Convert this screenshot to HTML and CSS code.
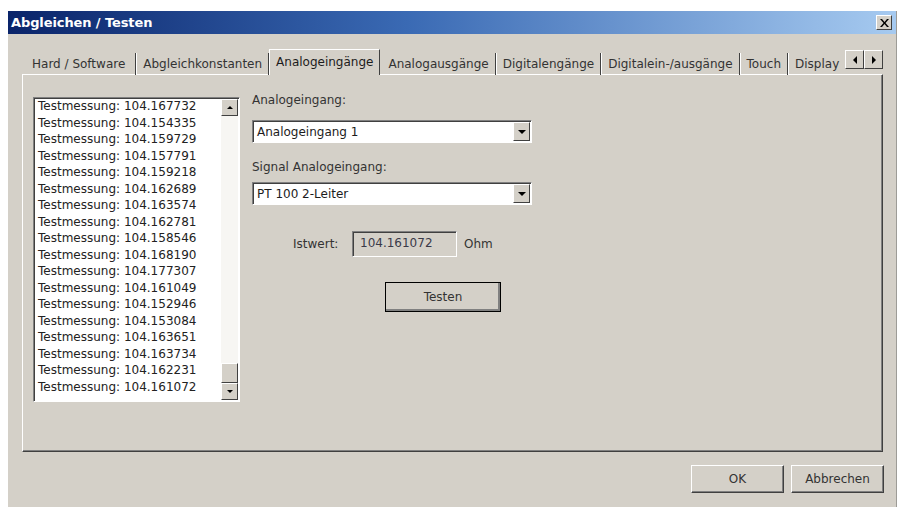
FILE: index.html
```html
<!DOCTYPE html>
<html lang="de">
<head>
  <meta charset="UTF-8" />
  <title>Abgleichen / Testen</title>
  <link rel="stylesheet" href="styles.css">
</head>
<body>

<div class="window">
  <div class="titlebar">
    <span class="caption">Abgleichen / Testen</span>
    <button class="close" title="Schließen">
      <svg width="9" height="8" viewBox="0 0 9 8">
        <path d="M0 0h2l2.5 3 2.5-3h2l-3.5 4 3.5 4h-2l-2.5-3-2.5 3h-2l3.5-4z" fill="#000"/>
      </svg>
    </button>
  </div>

  <div class="client">
    <div class="tabs">
      <div class="tab">Hard / Software</div>
      <div class="tab">Abgleichkonstanten</div>
      <div class="tab active">Analogeingänge</div>
      <div class="tab">Analogausgänge</div>
      <div class="tab">Digitalengänge</div>
      <div class="tab">Digitalein-/ausgänge</div>
      <div class="tab">Touch</div>
      <div class="tab last">Display</div>
      <div class="spin">
        <button class="spin-btn"><span class="tri left"></span></button>
        <button class="spin-btn"><span class="tri right"></span></button>
      </div>
    </div>

    <div class="panel">
      <div class="listbox">
        <ul class="items" id="items"></ul>
        <div class="vscroll">
          <button class="sb-btn"><span class="tri up"></span></button>
          <div class="track">
            <div class="thumb"></div>
          </div>
          <button class="sb-btn"><span class="tri down"></span></button>
        </div>
      </div>

      <div class="form">
        <label class="field-label first">Analogeingang:</label>
        <div class="combo">
          <span class="combo-text">Analogeingang 1</span>
          <button class="combo-btn"><span class="tri down"></span></button>
        </div>

        <label class="field-label">Signal Analogeingang:</label>
        <div class="combo">
          <span class="combo-text">PT 100 2-Leiter</span>
          <button class="combo-btn"><span class="tri down"></span></button>
        </div>

        <div class="value-row">
          <span class="value-label">Istwert:</span>
          <div class="readonly">104.161072</div>
          <span class="unit">Ohm</span>
        </div>

        <div class="test-row">
          <button class="btn default">Testen</button>
        </div>
      </div>
    </div>

    <div class="actions">
      <button class="btn">OK</button>
      <button class="btn">Abbrechen</button>
    </div>
  </div>
</div>

<script>
  const values = [
    "104.167732", "104.154335", "104.159729", "104.157791", "104.159218",
    "104.162689", "104.163574", "104.162781", "104.158546", "104.168190",
    "104.177307", "104.161049", "104.152946", "104.153084", "104.163651",
    "104.163734", "104.162231", "104.161072"
  ];
  const list = document.getElementById("items");
  values.forEach((v) => {
    const li = document.createElement("li");
    li.textContent = "Testmessung: " + v;
    list.appendChild(li);
  });
</script>

</body>
</html>
```

FILE: styles.css
```css
html, body {
  margin: 0;
  padding: 0;
  background: #fff;
}

body {
  padding: 11px 0 0 8px;
  font-family: "DejaVu Sans", "Liberation Sans", sans-serif;
  font-size: 12px;
  color: #1c1c1c;
}

button {
  font: inherit;
  color: inherit;
  padding: 0;
  margin: 0;
}

.window {
  width: 889px;
  height: 496px;
  display: flex;
  flex-direction: column;
  background: #d4d0c8;
  border-right: 1px solid #9d9c97;
  box-sizing: border-box;
}

/* caption bar */
.titlebar {
  height: 23px;
  flex: none;
  display: flex;
  align-items: center;
  justify-content: space-between;
  padding: 0 4px 0 3px;
  background: linear-gradient(to right, #0a246a 0%, #3a6ab4 45%, #a6caf0 100%);
}

.caption {
  color: #fff;
  font-weight: bold;
  font-size: 13px;
  letter-spacing: -0.1px;
}

.close {
  width: 16px;
  height: 15px;
  display: flex;
  align-items: center;
  justify-content: center;
  background: #d4d0c8;
  border: 1px solid;
  border-color: #fff #404040 #404040 #fff;
}

.client {
  flex: 1;
  display: flex;
  flex-direction: column;
  padding: 16px 13px 14px 14px;
}

/* tab strip */
.tabs {
  height: 25px;
  display: flex;
  align-items: flex-end;
  padding-left: 3px;
  position: relative;
  z-index: 1;
}

.tab {
  height: 22px;
  line-height: 22px;
  padding: 0 6px 0 7px;
  border-right: 1px solid #404040;
  box-shadow: 1px 0 0 #fff;
  color: #333;
  white-space: nowrap;
}

.tab:first-child {
  padding-right: 10px;
}

.tab.active {
  height: 25px;
  line-height: 24px;
  padding: 0 6px;
  border: 1px solid;
  border-color: #fff #404040 transparent #fff;
  border-bottom: none;
  background: #d4d0c8;
  box-shadow: none;
  margin-left: 0;
  margin-right: 1px;
  color: #1c1c1c;
}

.tab.last {
  flex: 1;
  min-width: 0;
  border-right: none;
  box-shadow: none;
  padding-right: 0;
}

.spin {
  flex: none;
  display: flex;
  align-self: flex-start;
  position: relative;
}

.spin-btn {
  width: 19px;
  height: 19px;
  display: flex;
  align-items: center;
  justify-content: center;
  background: #d4d0c8;
  border: 1px solid;
  border-color: #fff #404040 #404040 #fff;
}

/* small arrow glyphs */
.tri {
  width: 0;
  height: 0;
  border: 4px solid transparent;
}

.tri.left { border-right-color: #000; border-left-width: 0; }
.tri.right { border-left-color: #000; border-right-width: 0; }
.tri.up { border-bottom-color: #000; border-top-width: 0; }
.tri.down { border-top-color: #000; border-bottom-width: 0; }

/* page of the active tab */
.panel {
  height: 378px;
  flex: none;
  display: flex;
  align-items: flex-start;
  gap: 12px;
  padding: 22px 0 0 10px;
  box-sizing: border-box;
  border: 1px solid;
  border-color: #fff #404040 #404040 #fff;
  box-shadow: inset -1px -1px 0 #808080;
  margin-top: -1px;
}

.listbox {
  width: 207px;
  height: 305px;
  display: flex;
  background: #fff;
  border: 1px solid;
  border-color: #808080 #fff #fff #808080;
  box-shadow: inset 1px 1px 0 #404040;
  box-sizing: border-box;
}

.items {
  flex: 1;
  list-style: none;
  margin: 0;
  padding: 0 0 0 4px;
  font-size: 12px;
  line-height: 16.5px;
  color: #222;
  white-space: nowrap;
  overflow: hidden;
}

.vscroll {
  width: 17px;
  display: flex;
  flex-direction: column;
  margin: 1px 1px 1px 0;
}

.sb-btn {
  height: 17px;
  flex: none;
  display: flex;
  align-items: center;
  justify-content: center;
  background: #d4d0c8;
  border: 1px solid;
  border-color: #fff #404040 #404040 #fff;
}

.sb-btn .tri {
  border-width: 3px;
}

.sb-btn .tri.up { border-top-width: 0; }
.sb-btn .tri.down { border-bottom-width: 0; }

.track {
  flex: 1;
  display: flex;
  flex-direction: column;
  justify-content: flex-end;
  background: #f7f6f3;
}

.thumb {
  height: 18px;
  background: #d4d0c8;
  border: 1px solid;
  border-color: #fff #404040 #404040 #fff;
}

/* fields on the right */
.form {
  width: 280px;
  display: flex;
  flex-direction: column;
}

.field-label {
  height: 17px;
  margin: 17px 0 5px;
  color: #333;
}

.field-label.first {
  margin: -4px 0 10px;
}

.combo {
  height: 23px;
  display: flex;
  align-items: center;
  background: #fff;
  border: 1px solid;
  border-color: #808080 #fff #fff #808080;
  box-shadow: inset 1px 1px 0 #404040;
  box-sizing: border-box;
}

.combo-text {
  flex: 1;
  padding-left: 4px;
  padding-top: 1px;
}

.combo-btn {
  width: 17px;
  height: 19px;
  margin-right: 1px;
  display: flex;
  align-items: center;
  justify-content: center;
  background: #d4d0c8;
  border: 1px solid;
  border-color: #fff #404040 #404040 #fff;
}

.combo-btn .tri {
  border-width: 4px;
  border-bottom-width: 0;
}

.value-row {
  display: flex;
  align-items: center;
  margin-top: 26px;
  padding-left: 41px;
}

.value-label {
  width: 59px;
  color: #333;
}

.readonly {
  width: 105px;
  height: 26px;
  line-height: 22px;
  padding-left: 7px;
  box-sizing: border-box;
  border: 1px solid;
  border-color: #808080 #fff #fff #808080;
  box-shadow: inset 1px 1px 0 #404040;
  color: #3a3a48;
}

.unit {
  margin-left: 7px;
  color: #333;
}

.test-row {
  display: flex;
  margin-top: 25px;
  padding-left: 133px;
}

.btn {
  width: 93px;
  height: 28px;
  background: #d4d0c8;
  border: 1px solid;
  border-color: #fff #404040 #404040 #fff;
  box-shadow: inset -1px -1px 0 #808080;
  color: #333;
}

.btn.default {
  width: 116px;
  height: 30px;
  outline: 1px solid #000;
  outline-offset: -1px;
  box-shadow: inset -2px -2px 0 #808080;
}

.actions {
  display: flex;
  justify-content: flex-end;
  gap: 7px;
  margin-top: 13px;
  margin-right: -1px;
}
```
